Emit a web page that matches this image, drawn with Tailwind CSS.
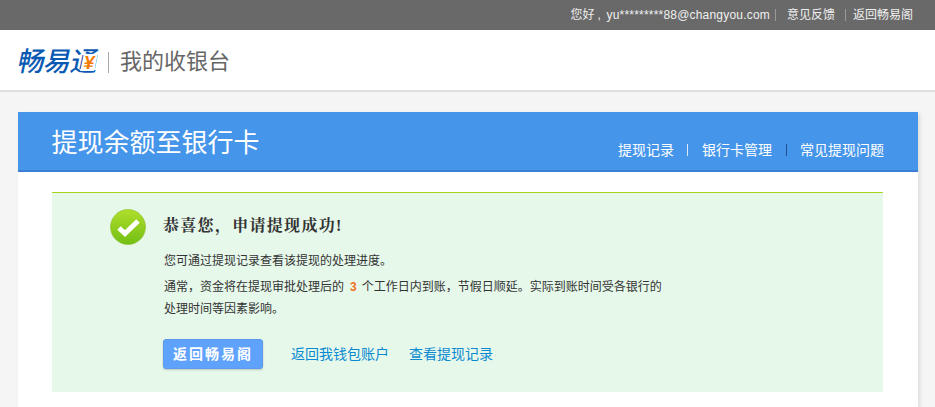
<!DOCTYPE html>
<html lang="zh-CN">

<head>
    <meta charset="UTF-8">
    <meta name="viewport" content="width=device-width, initial-scale=1.0">
    <title>提现余额至银行卡</title>
    <script src="https://cdn.jsdelivr.net/npm/@tailwindcss/browser@4"></script>
</head>

<body class="h-[407px] overflow-hidden bg-[#f5f5f5] font-['Liberation_Sans','Noto_Sans_CJK_SC',sans-serif]">

    <!-- top bar -->
    <div class="flex h-[30px] items-center justify-end bg-[#696969] pr-[22px] text-[12px] text-[#f0f0f0]">
        <span>您好</span>
        <span class="ml-[3px] w-[9px]">,</span>
        <span class="tracking-[0.2px]">yu*********88@changyou.com</span>
        <span class="ml-[5px] h-[12px] w-px bg-[#999]"></span>
        <a class="ml-[11px]">意见反馈</a>
        <span class="ml-[10px] h-[12px] w-px bg-[#999]"></span>
        <a class="ml-[7px]">返回畅易阁</a>
    </div>

    <!-- logo row -->
    <div class="flex h-[62px] items-center border-b-2 border-[#dedede] bg-white pt-[4px] pl-[18px]">
        <div class="flex w-[80px] -skew-x-12 items-center text-[27px] leading-none font-medium tracking-[-0.5px] whitespace-nowrap text-[#0a5ab4]">
            畅易<span class="relative">通<span class="absolute top-[5px] left-[11px] flex h-[17px] w-[14px] items-center justify-center bg-white text-[19px] font-bold text-[#f57c00]">¥</span></span>
        </div>
        <span class="ml-[10px] h-[21px] w-px bg-[#aaa]"></span>
        <span class="ml-[11px] text-[22px] leading-none text-[#666]">我的收银台</span>
    </div>

    <!-- card -->
    <div class="mt-[20px] ml-[18px] h-[295px] w-[900px] bg-white shadow-[2px_2px_4px_rgba(0,0,0,0.1)]">
        <div class="flex h-[60px] justify-between border-b-2 border-[#3b80d2] bg-[#4595ea] pr-[34px] pl-[33.5px] text-white">
            <h1 class="mt-[12px] text-[26px] leading-[38px]">提现余额至银行卡</h1>
            <div class="mt-[28px] flex h-[20px] items-center text-[14px]">
                <a>提现记录</a>
                <span class="mr-[14px] ml-[13px] h-[12px] w-px bg-[#dfeaf8]"></span>
                <a>银行卡管理</a>
                <span class="mr-[13px] ml-[14px] h-[12px] w-px bg-[#1f4f8c]"></span>
                <a>常见提现问题</a>
            </div>
        </div>

        <!-- success box -->
        <div class="mt-[20px] ml-[34px] flex h-[200px] w-[831px] border-t border-[#a8d41c] bg-[#e6f8ea]">
            <svg class="mt-[16px] ml-[58px]" width="36" height="36" viewBox="0 0 36 36">
                <defs>
                    <linearGradient id="okGrad" x1="0" y1="0" x2="0" y2="1">
                        <stop offset="0" stop-color="#b0de2c"/>
                        <stop offset="1" stop-color="#72bf14"/>
                    </linearGradient>
                </defs>
                <circle cx="18" cy="18" r="17.5" fill="url(#okGrad)" stroke="#8dbb2a" stroke-width="0.6"/>
                <path d="M9 19 L15 24.5 L28 12" fill="none" stroke="#fff" stroke-width="5"/>
            </svg>
            <div class="ml-[18px] w-[500px]">
                <h2 class="mt-[21px] -ml-px font-['Liberation_Serif','Noto_Serif_CJK_SC','Noto_Sans_CJK_SC',serif] text-[16px] leading-[24px] font-bold tracking-[1.3px] text-[#333]">恭喜您，申请提现成功!</h2>
                <p class="mt-[11px] text-[12px] leading-[24px] text-[#333]">您可通过提现记录查看该提现的处理进度。</p>
                <p class="mt-[3px] text-[12px] leading-[22px] text-[#333]">通常，资金将在提现审批处理后的<b class="mr-[5px] ml-[6px] text-[#f0701e]">3</b>个工作日内到账，节假日顺延。实际到账时间受各银行的处理时间等因素影响。</p>
                <div class="mt-[19px] -ml-px flex items-center text-[14px] text-[#0a8ad2]">
                    <button class="h-[30px] w-[100px] rounded-[3px] border border-[#5d9aec] bg-[#5fa2fc] text-[14px] font-bold tracking-[2px] text-white shadow-[0_1px_2px_rgba(0,0,0,0.2)]">返回畅易阁</button>
                    <a class="ml-[28px]">返回我钱包账户</a>
                    <a class="ml-[20px]">查看提现记录</a>
                </div>
            </div>
        </div>
    </div>

</body>

</html>
